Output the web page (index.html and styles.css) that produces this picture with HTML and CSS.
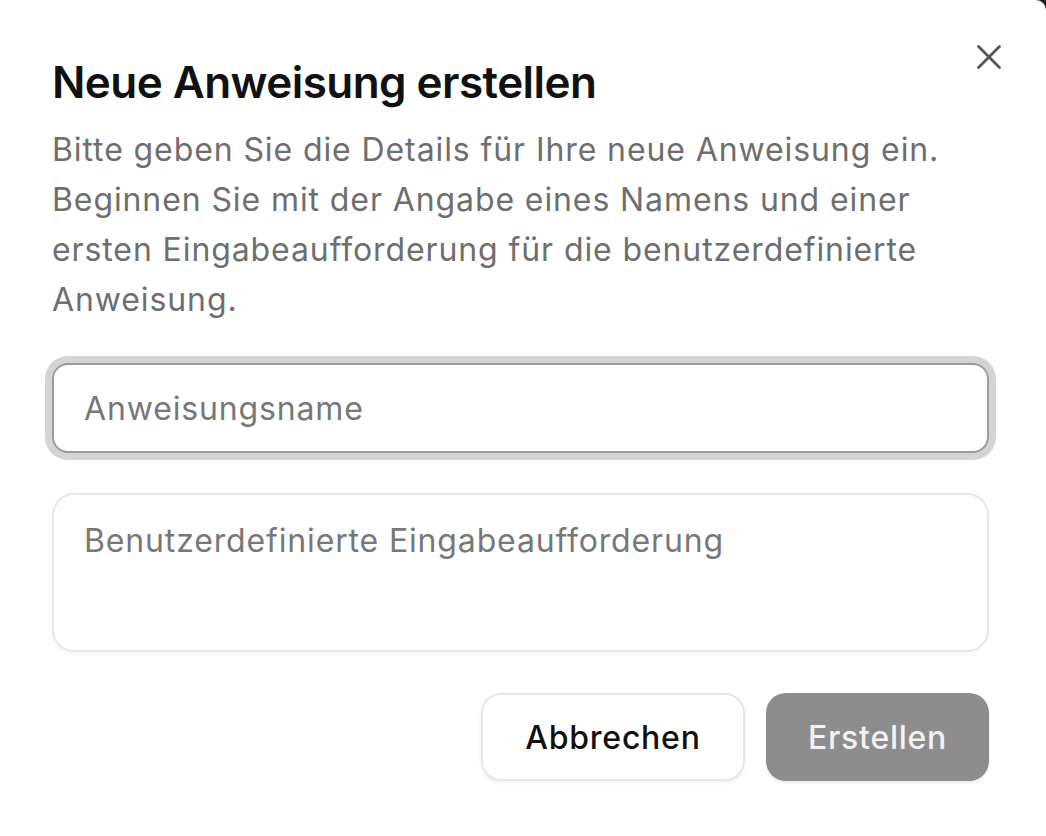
FILE: index.html
```html
<!DOCTYPE html>
<html lang="de">
<head>
<meta charset="utf-8">
<title>Neue Anweisung erstellen</title>
<link rel="stylesheet" href="styles.css">
</head>
<body>
<div class="dialog">
  <button class="close" aria-label="Schließen">
    <svg width="26" height="26" viewBox="0 0 26 26"><path d="M2.5 2.5 L23.5 23.5 M23.5 2.5 L2.5 23.5" stroke="#555" stroke-width="2.8" stroke-linecap="round" fill="none"/></svg>
  </button>
  <h1 class="title">Neue Anweisung erstellen</h1>
  <p class="desc">Bitte geben Sie die Details für Ihre neue Anweisung ein. Beginnen Sie mit der Angabe eines Namens und einer ersten Eingabeaufforderung für die benutzerdefinierte Anweisung.</p>
  <input class="field name" type="text" placeholder="Anweisungsname" autofocus>
  <textarea class="field prompt" placeholder="Benutzerdefinierte Eingabeaufforderung"></textarea>
  <div class="actions">
    <button class="btn cancel">Abbrechen</button>
    <button class="btn create">Erstellen</button>
  </div>
</div>
</body>
</html>
```
FILE: styles.css
```css
html {
  background: #1c1c1c;
  height: 100%;
}
body {
  margin: 0;
  min-height: 100%;
  background: #ffffff;
  border-top-right-radius: 10px;
  font-family: Inter, "Liberation Sans", sans-serif;
}
.dialog {
  position: relative;
  display: flex;
  flex-direction: column;
  padding: 56px 57px 0 52px;
}
.close {
  position: absolute;
  top: 44px;
  left: 976px;
  width: 26px;
  height: 26px;
  padding: 0;
  border: none;
  background: none;
  display: flex;
}
.title {
  margin: 0;
  font-size: 44px;
  line-height: 52px;
  font-weight: 600;
  color: #111111;
  letter-spacing: -0.55px;
}
.desc {
  margin: 17px 0 0;
  font-size: 32px;
  line-height: 50px;
  letter-spacing: 0.9px;
  color: #6e6e6e;
}
.field {
  box-sizing: border-box;
  width: 100%;
  font-family: inherit;
  font-size: 32px;
  letter-spacing: 0.85px;
  color: #222;
  background: #fff;
  outline: none;
}
.field::placeholder {
  color: #777777;
  opacity: 1;
}
.name {
  margin-top: 38px;
  height: 90px;
  padding: 0 30px;
  border: 2px solid #9c9c9c;
  border-radius: 16px;
  box-shadow: 0 0 0 7px #d4d4d4;
  caret-color: #111;
}
.prompt {
  margin-top: 40px;
  height: 159px;
  padding: 27px 30px 23px;
  border: 2px solid #e6e6e6;
  border-radius: 22px;
  box-shadow: 0 2px 4px rgba(0,0,0,0.04);
  resize: none;
  line-height: 38px;
}
.actions {
  margin-top: 41px;
  display: flex;
  justify-content: flex-end;
  gap: 21px;
}
.btn {
  height: 88px;
  border-radius: 20px;
  font-family: inherit;
  font-size: 32px;
  font-weight: 500;
  letter-spacing: 0.75px;
}
.cancel {
  width: 264px;
  background: #fff;
  color: #111;
  border: 2px solid #e6e6e6;
  box-shadow: 0 2px 4px rgba(0,0,0,0.05);
}
.create {
  width: 223px;
  background: #8d8d8d;
  color: #f2f2f2;
  border: none;
  box-shadow: 0 2px 3px rgba(0,0,0,0.08);
}
```
